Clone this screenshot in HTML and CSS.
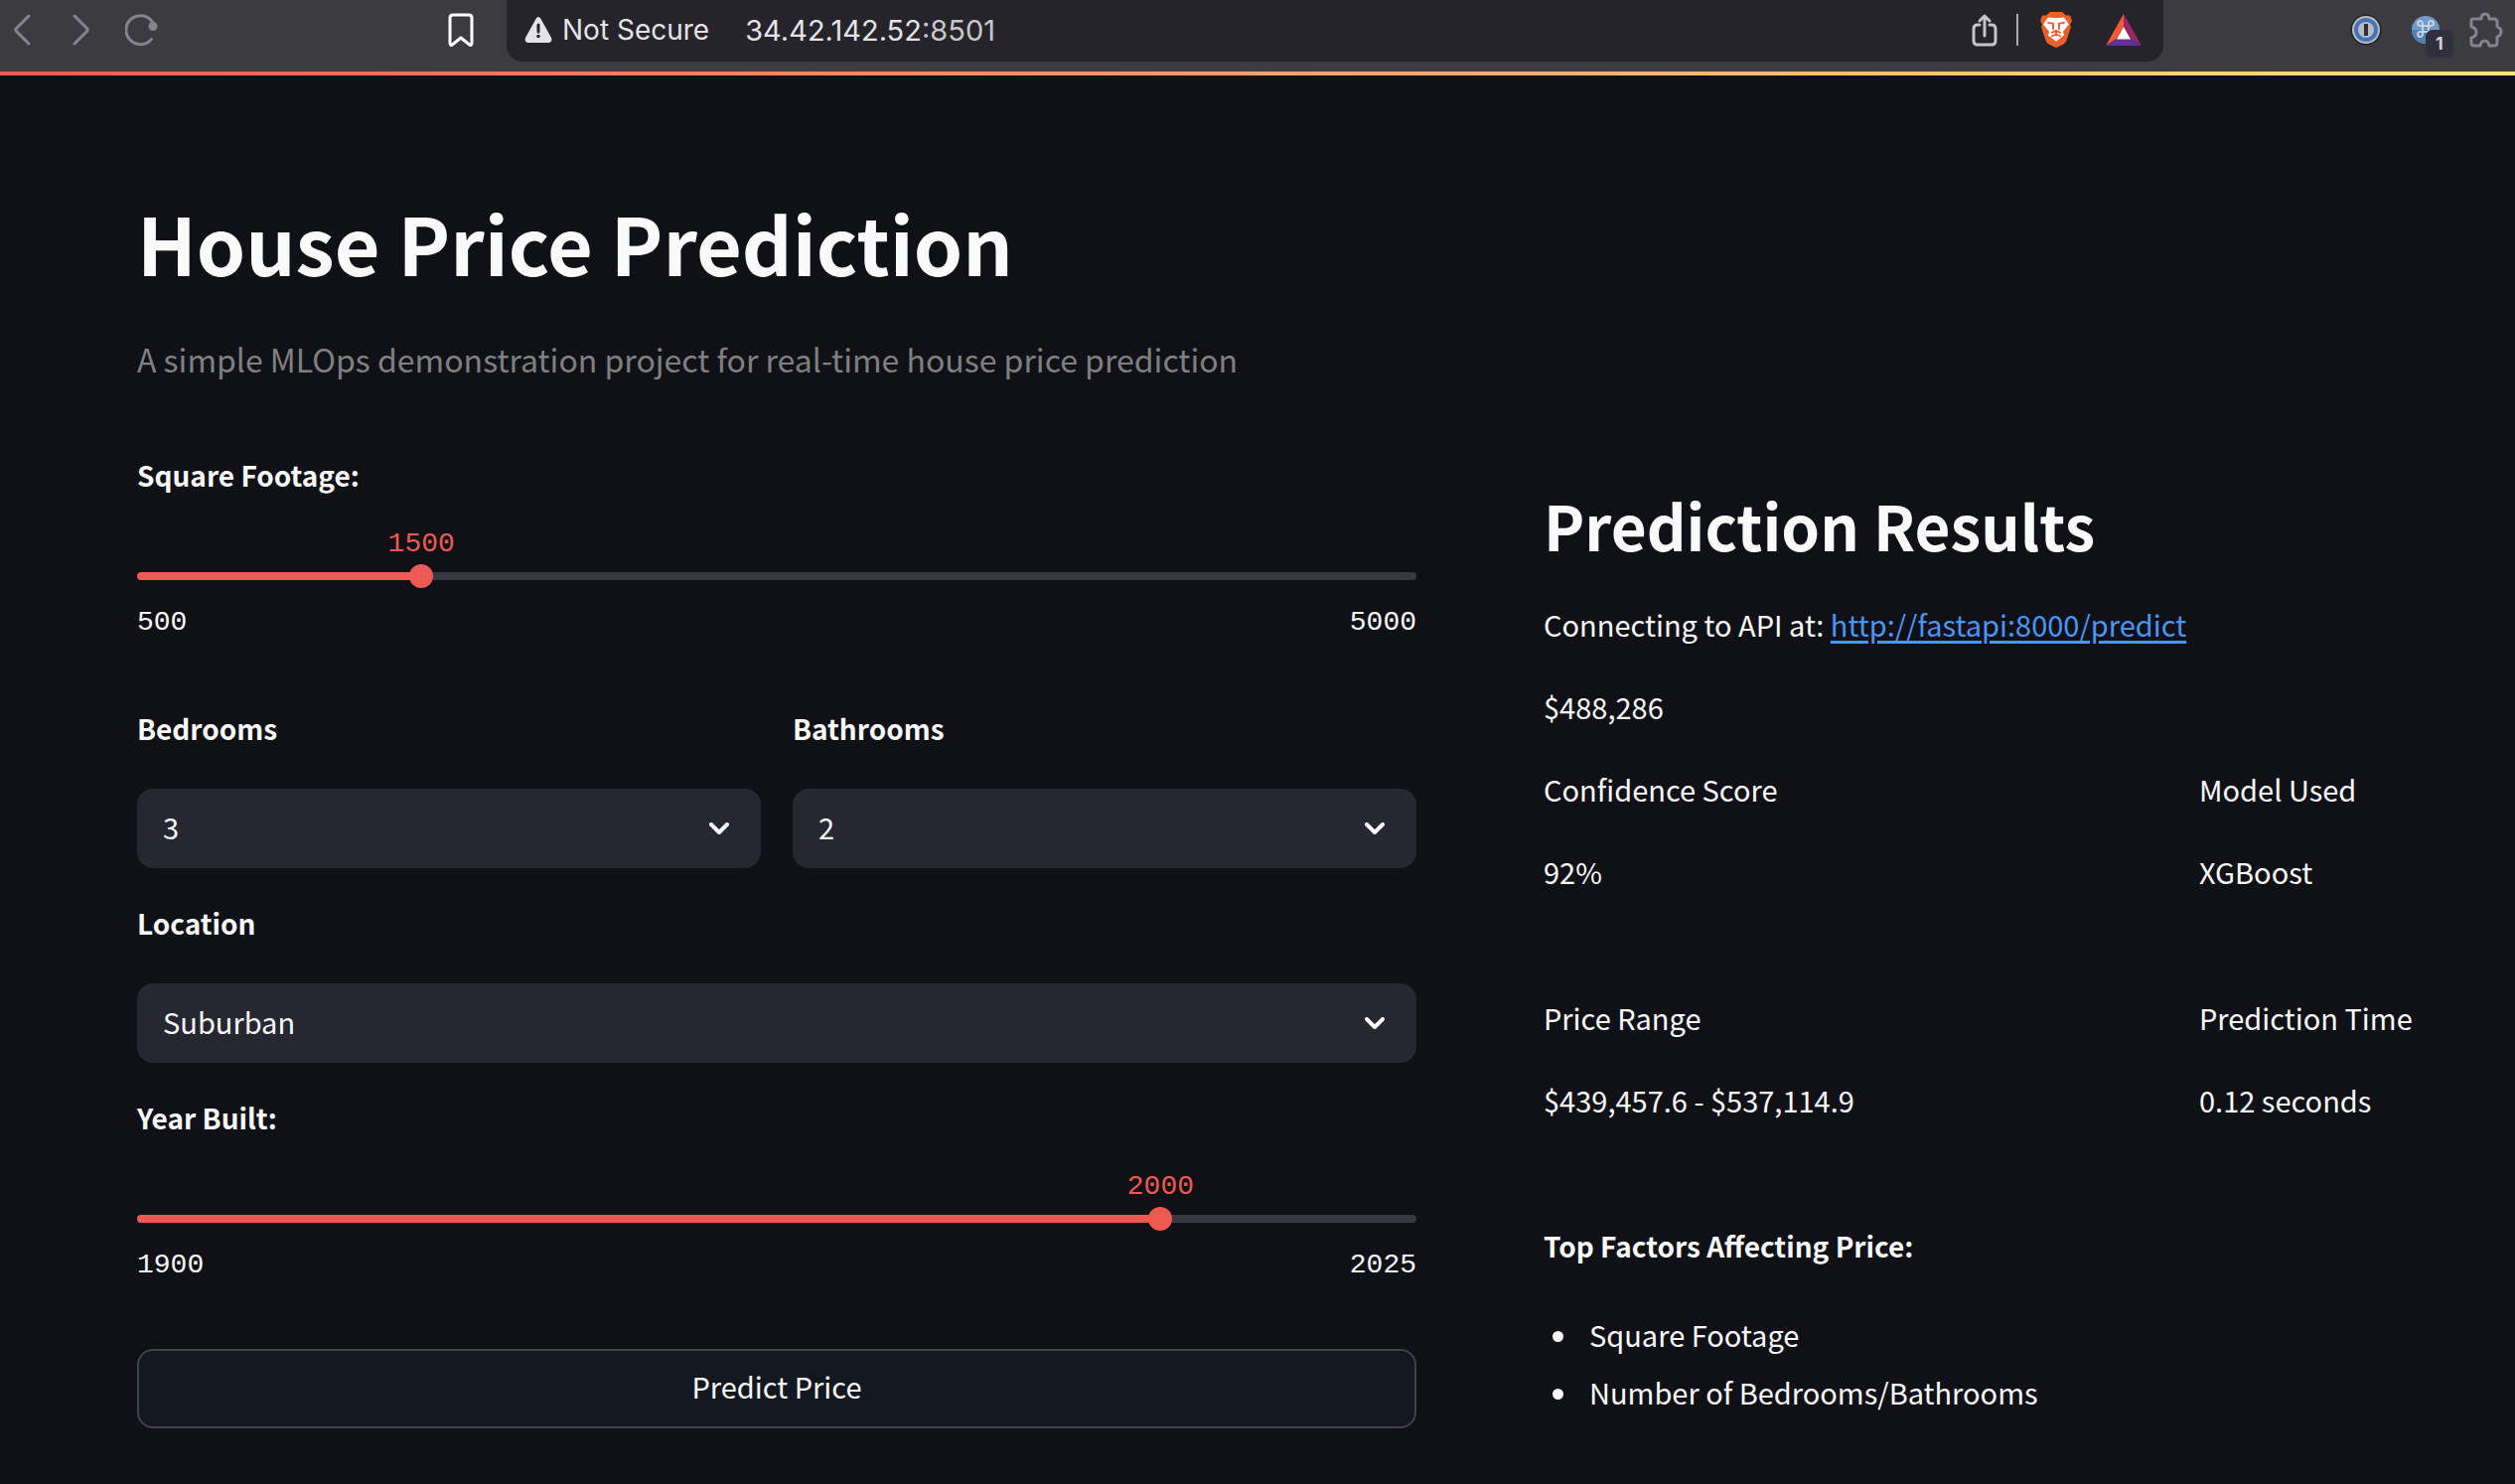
FILE: index.html
```html
<!DOCTYPE html>
<html lang="en">
<head>
<meta charset="utf-8">
<meta name="viewport" content="width=device-width, initial-scale=1">
<title>House Price Prediction</title>
<link rel="stylesheet" href="styles.css">
</head>
<body>
<header class="toolbar">
  <nav class="toolbar-nav" aria-label="Browser navigation">
    <button class="tool dim" type="button" aria-label="Back"><svg width="32" height="34" viewBox="-6 0 32 34"><path d="M17 3 4.500 15.500Q3 17 4.500 18.500L17 31"/></svg></button>
    <button class="tool dim" type="button" aria-label="Forward"><svg width="32" height="34" viewBox="-6 0 32 34"><path d="M3 3 15.500 15.500Q17 17 15.500 18.500L3 31"/></svg></button>
    <button class="tool dim" type="button" aria-label="Reload"><svg width="34" height="34" viewBox="2 0 34 34"><path d="M28.500 26.500A14.500 14.500 0 1 1 30 10"/><circle cx="30" cy="13.500" r="4.500" class="solid"/></svg></button>
  </nav>
  <button class="tool bright" type="button" aria-label="Bookmark"><svg width="28" height="36" viewBox="0 0 28 36"><path d="M6 3H22Q25 3 25 6V31Q25 35 22 32.500L14 26 6 32.500Q3 35 3 31V6Q3 3 6 3Z"/></svg></button>
  <div class="address">
    <svg class="warning" width="28" height="26" viewBox="0 0 28 26"><path d="M11.500 2Q14-2 16.500 2L27 21Q28.500 25.500 24 26H4Q-.5 25.500 1 21Z" fill="#e4e3e8"/><path d="M14 8V15" stroke="#25242a" stroke-width="3" stroke-linecap="round"/><circle cx="14" cy="19.500" r="1.800" fill="#25242a"/></svg>
    <span class="security">Not Secure</span>
    <span class="url">34.42.142.52<span class="port">:8501</span></span>
    <button class="tool light" type="button" aria-label="Share"><svg width="26" height="34" viewBox="0 0 26 34"><path d="M8 12H6Q2 12 2 16V28Q2 32 6 32H20Q24 32 24 28V16Q24 12 20 12H18M13 23V3M8 8 13 3 18 8"/></svg></button>
    <span class="divider"></span>
    <button class="tool" type="button" aria-label="Shields"><svg width="32" height="36" viewBox="0 0 32 40" preserveAspectRatio="none"><path d="M10 0H22L26 4 30 4 32 10 30 14 31 17 26 33Q25 36 16 40 7 36 6 33L1 17 2 14 0 10 2 4 6 4Z" fill="#eb5f2a"/><path d="M16 7 24 6 29 14 23 22 24 26 16 33 8 26 9 22 3 14 8 6Z" fill="#fff"/><path d="M8 12 13 13 13 19M24 12 19 13 19 19M12 23 16 21 20 23M16 21V26M12 27 16 25 20 27" fill="none" stroke="#eb5f2a" stroke-width="2"/></svg></button>
    <button class="tool" type="button" aria-label="Rewards"><svg width="36" height="32" viewBox="0 0 36 32"><path d="M18 0 0 32 11 25 18 13Z" fill="#f15a35"/><path d="M18 0 36 32 25 25 18 13Z" fill="#952964"/><path d="M0 32H36L25 25H11Z" fill="#5f3195"/><path d="M18 13 25 25.500H11Z" fill="#fff"/></svg></button>
  </div>
  <nav class="extensions" aria-label="Extensions">
    <button class="tool" type="button" aria-label="Passwords"><svg width="32" height="36" viewBox="0 0 32 36"><circle cx="16" cy="18" r="15.500" fill="#222329"/><circle cx="16" cy="18" r="14" fill="#b9bbc0"/><circle cx="16" cy="18" r="12" fill="#4273bd"/><circle cx="16" cy="18" r="8" fill="#b9bbc0"/><rect x="14" y="12" width="4" height="12" fill="#2d3038"/></svg></button>
    <button class="tool badge-host" type="button" aria-label="Shortcuts"><svg width="28" height="34" viewBox="0 0 28 34"><circle cx="14" cy="17" r="14" fill="#6f9bc9"/><path d="M0 17A14 14 0 0 0 28 17Z" fill="#4f80b4"/><path d="M11 13H17V19H11ZM11 13H9A2.500 2.500 0 1 1 11 11ZM17 13V11A2.500 2.500 0 1 1 19 13ZM17 19H19A2.500 2.500 0 1 1 17 21ZM11 19V21A2.500 2.500 0 1 1 9 19Z" fill="none" stroke="#c9d3df" stroke-width="2"/></svg><span class="badge">1</span></button>
    <button class="tool dim" type="button" aria-label="Extensions"><svg width="34" height="36" viewBox="0 0 34 36"><path d="M4 7H12Q12 2 16 2T20 7H25Q28 7 28 10V15Q32 16 32 20T28 25V31Q28 34 25 34H20Q19 29 15.500 29T11 34H5Q2 34 2 31V26Q7 25 7 20.500T2 15V9Q2 7 4 7Z"/></svg></button>
  </nav>
</header>

<main class="app">
  <h1 class="title">House Price Prediction</h1>
  <p class="subtitle">A simple MLOps demonstration project for real-time house price prediction</p>

  <div class="columns">
    <form class="form">
      <div class="slider" style="--position: 22.222%">
        <label class="label" for="footage">Square Footage:</label>
        <div class="track">
          <output class="value" for="footage">1500</output>
          <input class="range" id="footage" type="range" min="500" max="5000" value="1500">
        </div>
        <div class="limits"><span>500</span><span>5000</span></div>
      </div>
      <div class="pair">
        <div class="field">
          <label class="label" for="bedrooms">Bedrooms</label>
          <div class="select-box"><select class="select" id="bedrooms"><option>3</option></select><svg class="chevron" width="20" height="12" viewBox="0 0 20 12"><path d="M2 2 10 10 18 2"/></svg></div>
        </div>
        <div class="field">
          <label class="label" for="bathrooms">Bathrooms</label>
          <div class="select-box"><select class="select" id="bathrooms"><option>2</option></select><svg class="chevron" width="20" height="12" viewBox="0 0 20 12"><path d="M2 2 10 10 18 2"/></svg></div>
        </div>
      </div>
      <div class="field">
        <label class="label" for="location">Location</label>
        <div class="select-box"><select class="select" id="location"><option>Suburban</option></select><svg class="chevron" width="20" height="12" viewBox="0 0 20 12"><path d="M2 2 10 10 18 2"/></svg></div>
      </div>
      <div class="slider" style="--position: 80%">
        <label class="label" for="year">Year Built:</label>
        <div class="track">
          <output class="value" for="year">2000</output>
          <input class="range" id="year" type="range" min="1900" max="2025" value="2000">
        </div>
        <div class="limits"><span>1900</span><span>2025</span></div>
      </div>
      <button class="submit" type="button">Predict Price</button>
    </form>

    <section class="results">
      <h2 class="heading">Prediction Results</h2>
      <p>Connecting to API at: <a class="link" href="http://fastapi:8000/predict">http://fastapi:8000/predict</a></p>
      <p>$488,286</p>
      <div class="metrics">
        <div class="metric"><p>Confidence Score</p><p>92%</p></div>
        <div class="metric"><p>Model Used</p><p>XGBoost</p></div>
        <div class="metric"><p>Price Range</p><p>$439,457.6 - $537,114.9</p></div>
        <div class="metric"><p>Prediction Time</p><p>0.12 seconds</p></div>
      </div>
      <h3 class="label">Top Factors Affecting Price:</h3>
      <ul class="factors">
        <li>Square Footage</li>
        <li>Number of Bedrooms/Bathrooms</li>
      </ul>
    </section>
  </div>
</main>
</body>
</html>
```
FILE: styles.css
```css
:root {
  --bg: #0f1116;
  --text: #fafafa;
  --accent: #ed5a53;
  --field: #262730;
  --line: 51px;
}

* { box-sizing: border-box; }

body {
  margin: 0;
  background: var(--bg);
  color: var(--text);
  font: 29px/51px "Noto Sans CJK JP", "Noto Sans CJK SC", "Noto Sans", sans-serif;
}

h1, h2, h3, p, ul { margin: 0; padding: 0; }
button, select, input { font: inherit; color: inherit; margin: 0; }

/* Browser toolbar */
.toolbar {
  display: flex;
  align-items: flex-start;
  height: 76px;
  padding: 0 12px 0 6px;
  background: #3c3b40;
  border-bottom: 4px solid;
  border-image: linear-gradient(90deg, #ed5a53, #fbe281) 1;
  font-family: Inter, sans-serif;
  font-size: 28px;
}

.toolbar-nav, .extensions {
  display: flex;
  align-items: center;
  height: 60px;
}

.toolbar-nav { gap: 28px; margin-right: 290px; }
.extensions { gap: 30px; margin-left: auto; }

.tool {
  display: flex;
  padding: 0;
  border: 0;
  background: none;
  fill: none;
  stroke-width: 3;
  stroke-linecap: round;
  stroke-linejoin: round;
}

.toolbar > .tool { height: 60px; align-items: center; margin-right: 32px; }
.dim { stroke: #85848a; }
.bright { stroke: #fff; }
.light { stroke: #c5c4ca; }
.solid { fill: #85848a; stroke: none; }

.address {
  display: flex;
  align-items: center;
  flex: 0 1 1668px;
  height: 62px;
  padding: 0 22px 2px 18px;
  background: #25242a;
  border-radius: 0 0 16px 16px;
  color: #e4e3e8;
}

.warning { margin-right: 10px; }
.security { margin-right: 36px; }
.url { flex: 1; font-size: 29px; }
.port { color: #c8c7cd; }
.divider { width: 2px; height: 32px; margin: 0 22px 0 19px; background: #aaa9af; }
.address .tool + .tool { margin-left: 34px; }

.badge-host { position: relative; }
.badge {
  position: absolute;
  left: 14px;
  top: 17px;
  width: 28px;
  height: 28px;
  border-radius: 7px;
  background: #302f3c;
  color: #d0cfd6;
  font: 700 18px/28px Inter, sans-serif;
  text-align: center;
}

/* Page */
.app { padding: 115px 78px 50px 138px; }
.title { font-size: 79px; line-height: 106px; font-weight: 700; }
.subtitle { margin-top: 36px; font-size: 32px; line-height: 56px; color: #808080; }

.columns {
  display: grid;
  grid-template-columns: 1288fr 900fr;
  gap: 128px;
  margin-top: 64px;
}

.form { display: flex; flex-direction: column; gap: 30px; }
.label { display: block; font-size: 28px; line-height: var(--line); font-weight: 700; }

.slider { height: 225px; }
.track {
  position: relative;
  height: 8px;
  margin-top: 72px;
  border-radius: 4px;
  background: linear-gradient(90deg, var(--accent) var(--position), #373940 var(--position));
}
.range {
  position: absolute;
  left: -12px;
  top: -8px;
  width: calc(100% + 24px);
  height: 24px;
  appearance: none;
  background: none;
}
.range::-webkit-slider-thumb {
  appearance: none;
  width: 24px;
  height: 24px;
  border-radius: 50%;
  background: var(--accent);
}
.value, .limits { font: 28px/32px "Liberation Mono", monospace; }
.value {
  position: absolute;
  left: var(--position);
  bottom: 20px;
  transform: translateX(-50%);
  color: var(--accent);
}
.limits { display: flex; justify-content: space-between; margin-top: 27px; }

.pair { display: grid; grid-template-columns: 1fr 1fr; gap: 32px; }
.select-box { display: grid; align-items: center; margin-top: 35px; }
.select, .chevron { grid-area: 1 / 1; }
.select {
  width: 100%;
  height: 80px;
  padding: 0 26px 4px;
  border: 0;
  border-radius: 16px;
  appearance: none;
  background: var(--field);
}
.chevron {
  justify-self: end;
  margin-right: 32px;
  fill: none;
  stroke: var(--text);
  stroke-width: 4;
  stroke-linecap: round;
  stroke-linejoin: round;
  pointer-events: none;
}
.submit {
  height: 80px;
  margin-top: 3px;
  padding: 0 16px 5px;
  border: 2px solid #41424a;
  border-radius: 16px;
  background: #131720;
}

.results { display: flex; flex-direction: column; gap: 32px; padding-top: 32px; }
.heading { font-size: 62px; line-height: 86px; font-weight: 600; }
.link { color: #4a96f8; text-underline-offset: 4px; text-decoration-thickness: 3px; }
.metrics { display: grid; grid-template-columns: 628fr 240fr; gap: 96px 32px; padding-bottom: 64px; }
.metric { display: flex; flex-direction: column; gap: 32px; }
.factors { padding: 2px 0 0 38px; line-height: 58px; }
.factors li { padding-left: 8px; }
```
